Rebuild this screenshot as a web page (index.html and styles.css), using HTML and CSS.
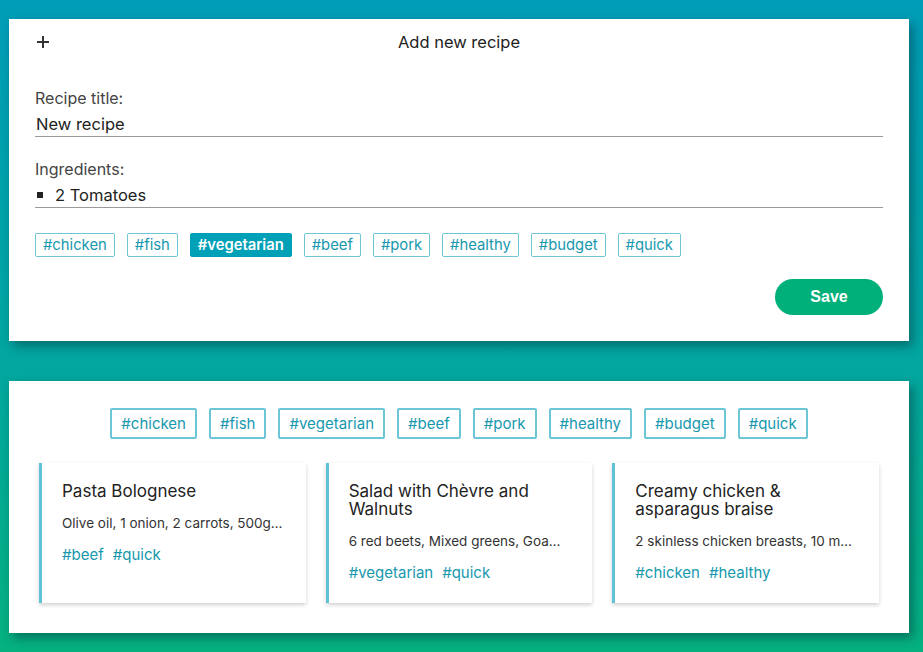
FILE: index.html
```html
<!DOCTYPE html>
<html lang="en">
<head>
<meta charset="utf-8">
<title>Recipes</title>
<link rel="stylesheet" href="styles.css">
</head>
<body>
<div class="page">
  <section class="panel form-panel">
    <header class="form-head">
      <svg class="plus" width="14" height="14" viewBox="0 0 14 14"><path d="M7 1v12M1 7h12" stroke="#333" stroke-width="2" fill="none"/></svg>
      <h1 class="form-title">Add new recipe</h1>
    </header>
    <div class="field">
      <label class="label">Recipe title:</label>
      <div class="input">New recipe</div>
    </div>
    <div class="field">
      <label class="label">Ingredients:</label>
      <div class="input list"><span class="bullet"></span>2 Tomatoes</div>
    </div>
    <div class="tag-row">
      <span class="tag">#chicken</span>
      <span class="tag">#fish</span>
      <span class="tag active">#vegetarian</span>
      <span class="tag">#beef</span>
      <span class="tag">#pork</span>
      <span class="tag">#healthy</span>
      <span class="tag">#budget</span>
      <span class="tag">#quick</span>
    </div>
    <div class="actions"><button class="save">Save</button></div>
  </section>

  <section class="panel list-panel">
    <div class="filter-row">
      <span class="filter">#chicken</span>
      <span class="filter">#fish</span>
      <span class="filter">#vegetarian</span>
      <span class="filter">#beef</span>
      <span class="filter">#pork</span>
      <span class="filter">#healthy</span>
      <span class="filter">#budget</span>
      <span class="filter">#quick</span>
    </div>
    <div class="cards">
      <article class="card">
        <h2 class="card-title">Pasta Bolognese</h2>
        <p class="card-desc">Olive oil, 1 onion, 2 carrots, 500g…</p>
        <div class="card-tags"><span>#beef</span><span>#quick</span></div>
      </article>
      <article class="card">
        <h2 class="card-title">Salad with Chèvre and Walnuts</h2>
        <p class="card-desc">6 red beets, Mixed greens, Goa…</p>
        <div class="card-tags"><span>#vegetarian</span><span>#quick</span></div>
      </article>
      <article class="card">
        <h2 class="card-title">Creamy chicken &amp; asparagus braise</h2>
        <p class="card-desc">2 skinless chicken breasts, 10 m…</p>
        <div class="card-tags"><span>#chicken</span><span>#healthy</span></div>
      </article>
    </div>
  </section>
</div>
</body>
</html>
```

FILE: styles.css
```css
* { box-sizing: border-box; }
html, body { margin: 0; padding: 0; }
body {
  width: 923px;
  height: 652px;
  overflow: hidden;
  background: linear-gradient(180deg, #009db8 0%, #03a6a0 55%, #05b17f 100%);
  font-family: Inter, "Noto Sans", sans-serif;
  color: #333;
}
.page {
  padding: 19px 14px 0 9px;
  display: flex;
  flex-direction: column;
  gap: 40px;
}
.panel {
  background: #fff;
  width: 900px;
  box-shadow: 4px 5px 10px rgba(0, 40, 50, 0.45);
}
.form-panel { padding: 0 26px 26px; }
.form-head {
  height: 46px;
  display: flex;
  align-items: center;
  position: relative;
}
.plus { margin-left: 1px; }
.form-title {
  position: absolute;
  left: 0; right: 0; top: 0;
  line-height: 46px;
  margin: 0;
  text-align: center;
  font-size: 16.5px;
  font-weight: 400;
  color: #222;
}
.field { display: flex; flex-direction: column; }
.field + .field { margin-top: 20px; }
.label {
  display: block;
  font-size: 16px;
  line-height: 24px;
  color: #444;
  margin-top: 21px;
}
.field + .field .label { margin-top: 0; }
.input {
  font-size: 16.5px;
  line-height: 24px;
  color: #222;
  padding-left: 1px;
  border-bottom: 1px solid #9a9a9a;
  margin-top: 2px;
}
.list { display: flex; align-items: center; padding-left: 2px; }
.bullet {
  width: 6px; height: 6px;
  background: #222;
  margin-right: 12px;
}
.tag-row {
  display: flex;
  gap: 12px;
  margin-top: 25px;
}
.tag {
  height: 24px;
  line-height: 22px;
  padding: 0 7px;
  border: 1px solid #6cc6d6;
  border-radius: 2px;
  font-size: 14.8px;
  color: #1698ae;
}
.tag.active {
  background: #00a0b7;
  border-color: #00a0b7;
  color: #fff;
  font-weight: 600;
}
.actions {
  display: flex;
  justify-content: flex-end;
  margin-top: 22px;
}
.save {
  width: 108px;
  height: 36px;
  border: none;
  border-radius: 18px;
  background: #00b07a;
  color: #fff;
  font-family: "Liberation Sans", Arial, sans-serif;
  font-weight: 700;
  font-size: 16px;
}
.list-panel { padding: 27px 30px 30px; }
.filter-row {
  display: flex;
  justify-content: center;
  gap: 12px;
}
.filter {
  height: 31px;
  line-height: 27px;
  padding: 0 9px;
  border: 2px solid #6cc6d6;
  border-radius: 2px;
  font-size: 15px;
  color: #1698ae;
}
.cards {
  display: grid;
  grid-template-columns: repeat(3, 1fr);
  gap: 20px;
  margin-top: 24px;
}
.card {
  border-left: 3px solid #5fc2d6;
  padding: 19px 20px 21px 20px;
  box-shadow: 0 2px 4px rgba(0, 0, 0, 0.18);
  min-width: 0;
}
.card-title {
  margin: 0;
  font-size: 17px;
  line-height: 18px;
  font-weight: 400;
  color: #222;
}
.card-desc {
  margin: 14px 0 0;
  font-size: 13.5px;
  line-height: 18px;
  color: #333;
  white-space: nowrap;
  overflow: hidden;
  text-overflow: ellipsis;
}
.card-tags {
  margin-top: 14px;
  display: flex;
  gap: 9px;
  font-size: 15px;
  line-height: 18px;
  color: #1698ae;
}
```
